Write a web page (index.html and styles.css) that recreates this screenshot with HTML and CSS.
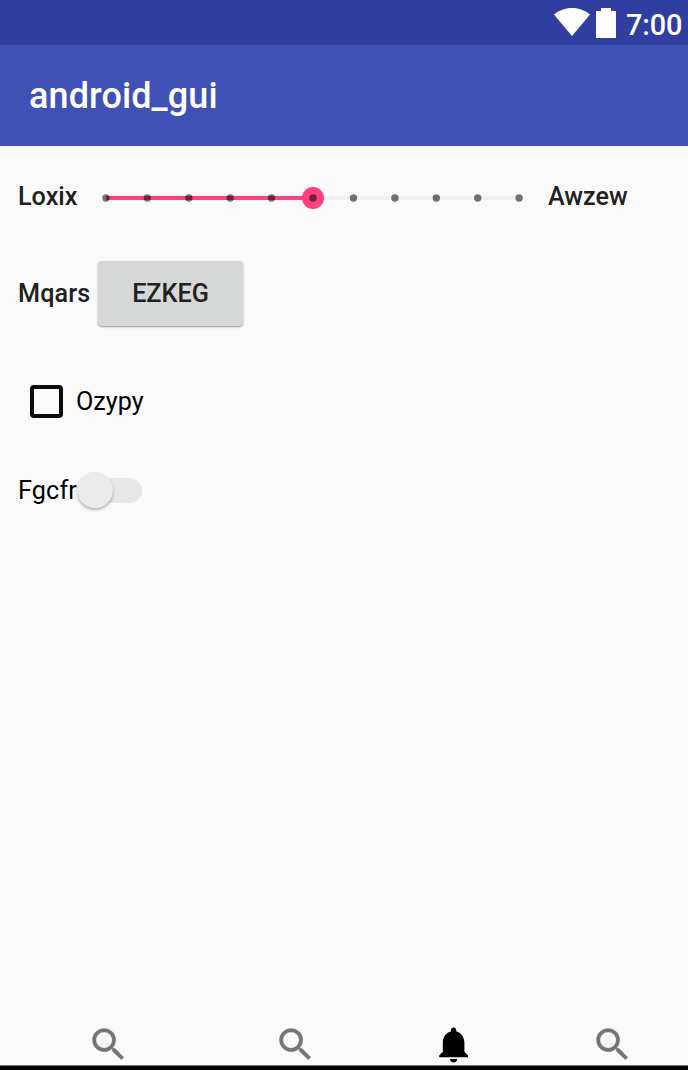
FILE: index.html
```html
<!DOCTYPE html>
<html lang="en">
<head>
<meta charset="utf-8">
<title>android_gui</title>
<link rel="stylesheet" href="styles.css">
</head>
<body>
<div class="screen">
  <div class="status">
    <svg class="wifi" width="36" height="28" viewBox="0 0 36 28"><path d="M0 6.5C5 2.4 11 0 18 0s13 2.4 18 6.5L18 28z"/></svg>
    <svg class="battery" width="20" height="30" viewBox="0 0 20 30"><path d="M0 3h5V0h10v3h5v27H0z"/></svg>
    <span class="time">7:00</span>
  </div>
  <header class="appbar"><h1 class="title">android_gui</h1></header>
  <main class="content">
    <div class="row row-slider">
      <span class="label">Loxix</span>
      <svg class="slider" width="442" height="24" viewBox="0 0 442 24">
        <path class="track" d="M15 12H428"/>
        <path class="progress" d="M15 12H222"/>
        <circle class="thumb" cx="222" cy="12" r="11"/>
        <g class="ticks">
          <circle cx="15" cy="12" r="3.7"/><circle cx="56.4" cy="12" r="3.7"/><circle cx="97.8" cy="12" r="3.7"/><circle cx="139.2" cy="12" r="3.7"/><circle cx="180.5" cy="12" r="3.7"/><circle cx="222" cy="12" r="3.7"/><circle cx="262.5" cy="12" r="3.7"/><circle cx="303.9" cy="12" r="3.7"/><circle cx="345.3" cy="12" r="3.7"/><circle cx="386.7" cy="12" r="3.7"/><circle cx="428.1" cy="12" r="3.7"/>
        </g>
      </svg>
      <span class="label end">Awzew</span>
    </div>
    <div class="row row-button">
      <span class="label mid">Mqars</span>
      <button class="button">EZKEG</button>
    </div>
    <div class="row row-check">
      <span class="box"></span>
      <span class="text">Ozypy</span>
    </div>
    <div class="row row-switch">
      <span class="text">Fgcfr</span>
      <span class="switch"><span class="knob"></span></span>
    </div>
  </main>
  <nav class="nav">
    <svg class="icon" viewBox="0 0 24 24"><path d="M15.5 14h-.79l-.28-.27A6.47 6.47 0 0 0 16 9.5 6.5 6.5 0 1 0 9.5 16c1.61 0 3.09-.59 4.23-1.57l.27.28v.79l5 4.99L20.49 19zm-6 0a4.5 4.5 0 1 1 0-9 4.5 4.5 0 0 1 0 9z"/></svg>
    <svg class="icon second" viewBox="0 0 24 24"><path d="M15.5 14h-.79l-.28-.27A6.47 6.47 0 0 0 16 9.5 6.5 6.5 0 1 0 9.5 16c1.61 0 3.09-.59 4.23-1.57l.27.28v.79l5 4.99L20.49 19zm-6 0a4.5 4.5 0 1 1 0-9 4.5 4.5 0 0 1 0 9z"/></svg>
    <svg class="icon bell" viewBox="0 0 24 24"><path d="M12 22c1.1 0 2-.9 2-2h-4c0 1.1.89 2 2 2zm6-6v-5c0-3.07-1.64-5.64-4.5-6.32V4c0-.83-.67-1.5-1.5-1.5s-1.5.67-1.5 1.5v.68C7.63 5.36 6 7.92 6 11v5l-2 2v1h16v-1l-2-2z"/></svg>
    <svg class="icon last" viewBox="0 0 24 24"><path d="M15.5 14h-.79l-.28-.27A6.47 6.47 0 0 0 16 9.5 6.5 6.5 0 1 0 9.5 16c1.61 0 3.09-.59 4.23-1.57l.27.28v.79l5 4.99L20.49 19zm-6 0a4.5 4.5 0 1 1 0-9 4.5 4.5 0 0 1 0 9z"/></svg>
  </nav>
</div>
</body>
</html>
```
FILE: styles.css
```css
* { box-sizing: border-box; }
body { margin: 0; font-family: Roboto, sans-serif; background: #fafafa; }
svg { display: block; flex: none; }
.screen { width: 688px; height: 1070px; display: flex; flex-direction: column; background: #fafafa; overflow: hidden; }
.status { height: 45px; background: #303f9f; display: flex; align-items: flex-start; justify-content: flex-end; padding: 8px 6px 0 0; color: #fff; fill: #fff; }
.battery { margin-left: 6px; }
.time { margin-left: 10px; width: 56px; font-size: 28.8px; font-weight: 500; line-height: 34px; letter-spacing: -.15px; white-space: nowrap; }
.appbar { height: 101px; background: #3f51b5; display: flex; align-items: center; padding-left: 29px; }
.title { margin: 0; color: #fff; font-size: 36px; font-weight: 500; line-height: 42px; letter-spacing: .1px; }
.content { flex: 1; padding-left: 18px; }
.row { display: flex; align-items: center; white-space: nowrap; }
.label { font-size: 25.2px; font-weight: 500; line-height: 30px; color: #212121; width: 73px; flex: none; padding-bottom: 2px; }
.text { font-size: 25.2px; line-height: 30px; color: #000; }
.row-slider { height: 24px; margin-top: 40px; }
.end { margin-left: 15px; width: auto; }
.mid { letter-spacing: .15px; padding-bottom: 0; }
.track, .progress { stroke-width: 4; }
.track { stroke: #f0f0f0; }
.progress { stroke: #ff4081; }
.thumb { fill: #ff4081; }
.ticks { fill: #000; fill-opacity: .54; }
.row-button { height: 66px; margin-top: 51px; }
.button { width: 145px; height: 65px; margin: 0 0 1px 7px; padding: 0; border: 0; border-radius: 4px; background: #d6d8d7; box-shadow: 0 1px 2px rgba(0,0,0,.4); color: #212121; font: 500 25.2px/30px Roboto, sans-serif; }
.row-check { height: 34px; margin-top: 57px; padding-left: 12px; }
.row-check .text { padding-top: 2px; }
.box { width: 33px; height: 33px; border: 4px solid #0a0a0a; border-radius: 4px; margin-right: 13px; }
.row-switch { height: 38px; margin-top: 53px; }
.row-switch .text { width: 60px; padding-top: 1px; letter-spacing: .15px; }
.switch { width: 64px; height: 25px; border-radius: 13px; background: #e7e7e7; display: flex; align-items: center; }
.knob { width: 36px; height: 36px; margin-left: -1px; border-radius: 50%; flex: none; background: #ebebeb; box-shadow: 0 2px 3px rgba(0,0,0,.28); }
.nav { height: 48px; flex: none; border-bottom: 4px solid #000; box-shadow: inset 0 -1px #777; display: flex; align-items: flex-start; padding-left: 86.6px; }
.icon { width: 43.2px; height: 43.2px; fill: #757575; stroke: #757575; stroke-width: .15; margin-top: .6px; }
.second { margin-left: 144px; }
.bell { fill: #000; stroke: none; margin-left: 115px; }
.last { margin-left: 115.8px; }
```
